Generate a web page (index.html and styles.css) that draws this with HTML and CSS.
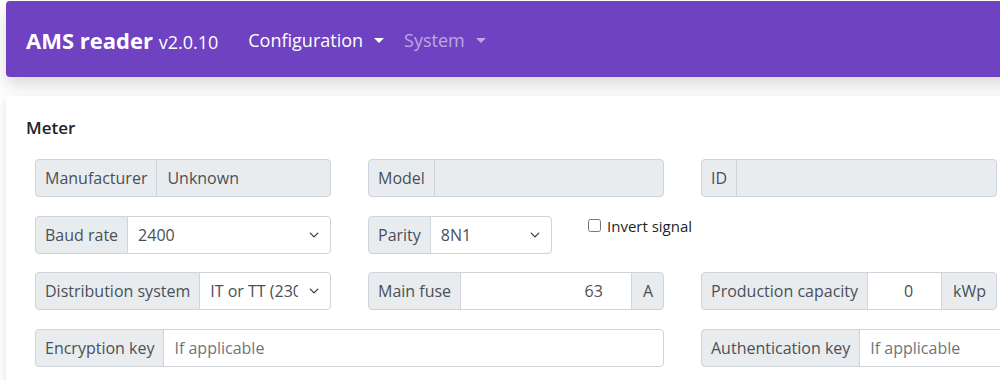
FILE: index.html
```html
<!DOCTYPE html>
<html lang="en">
<head>
    <meta charset="UTF-8">
    <meta name="viewport" content="width=device-width, initial-scale=1.0">
    <title>AMS reader</title>
    <link rel="stylesheet" href="styles.css">
</head>
<body>
   <div class="wrapper">
       <nav class="navbar">
           <a href="#" class="navbar-brand">AMS reader <small>v2.0.10</small></a>
           <ul class="nav">
               <li class="nav-item"><a href="#" class="nav-link dropdown">Configuration</a></li>
               <li class="nav-item"><a href="#" class="nav-link dropdown muted">System</a></li>
           </ul>
       </nav>

       <div class="card">
           <h5 class="card-title">Meter</h5>
           <div class="form-grid">
               <div class="input-group">
                   <span class="input-group-text">Manufacturer</span>
                   <input type="text" class="form-control" value="Unknown" disabled>
               </div>
               <div class="input-group">
                   <span class="input-group-text">Model</span>
                   <input type="text" class="form-control" disabled>
               </div>
               <div class="input-group">
                   <span class="input-group-text">ID</span>
                   <input type="text" class="form-control" disabled>
               </div>

               <div class="input-group">
                   <span class="input-group-text">Baud rate</span>
                   <select class="form-select">
                       <option>2400</option>
                       <option>9600</option>
                   </select>
               </div>
               <div class="cell-flex">
                   <div class="input-group parity">
                       <span class="input-group-text">Parity</span>
                       <select class="form-select">
                           <option>8N1</option>
                           <option>8E1</option>
                       </select>
                   </div>
                   <div class="form-check">
                       <input type="checkbox" id="invert" class="form-check-input">
                       <label for="invert" class="form-check-label">Invert signal</label>
                   </div>
               </div>
               <div></div>

               <div class="input-group">
                   <span class="input-group-text">Distribution system</span>
                   <select class="form-select">
                       <option>IT or TT (230V)</option>
                       <option>TN (400V)</option>
                   </select>
               </div>
               <div class="input-group">
                   <span class="input-group-text">Main fuse</span>
                   <input type="number" class="form-control number" value="63">
                   <span class="input-group-text unit">A</span>
               </div>
               <div class="input-group">
                   <span class="input-group-text">Production capacity</span>
                   <input type="number" class="form-control number" value="0">
                   <span class="input-group-text unit">kWp</span>
               </div>

               <div class="input-group span-2">
                   <span class="input-group-text">Encryption key</span>
                   <input type="text" class="form-control" placeholder="If applicable">
               </div>
               <div class="input-group wide">
                   <span class="input-group-text">Authentication key</span>
                   <input type="text" class="form-control" placeholder="If applicable">
               </div>
           </div>
       </div>
   </div>
</body>
</html>
```

FILE: styles.css
```css
html, body {
    margin: 0;
    overflow: hidden;
    background: #fff;
}
body {
    font-family: "Open Sans", "Noto Sans", sans-serif;
    font-size: 16px;
    color: #212529;
}
.wrapper {
    width: 1400px;
    padding: 1px 0 0 6px;
}
.navbar {
    display: flex;
    align-items: center;
    height: 76px;
    padding: 0 20px;
    background: #6f42c1;
    border-radius: 4px;
    box-shadow: 0 8px 16px rgba(0, 0, 0, 0.15);
}
.navbar-brand {
    color: #fff;
    font-size: 22px;
    font-weight: 700;
    text-decoration: none;
    margin-right: 30px;
    padding-top: 2px;
}
.navbar-brand small {
    font-size: 18px;
    font-weight: 400;
}
.nav {
    display: flex;
    gap: 20px;
    list-style: none;
    margin: 0;
    padding: 2px 0 0 0;
}
.nav-link {
    color: #fff;
    font-size: 18px;
    text-decoration: none;
}
.nav-link.muted {
    color: rgba(255, 255, 255, 0.55);
}
.dropdown::after {
    content: '';
    display: inline-block;
    margin-left: 11px;
    vertical-align: 4px;
    border-top: 5px solid;
    border-left: 5px solid transparent;
    border-right: 5px solid transparent;
}
.card {
    margin-top: 19px;
    padding: 20px 20px 30px 20px;
    background: #fff;
    border-radius: 4px;
    box-shadow: 0 4px 12px rgba(0, 0, 0, 0.12);
}
.card-title {
    margin: 0 0 20px 0;
    font-size: 17px;
    font-weight: 600;
}
.form-grid {
    display: grid;
    grid-template-columns: repeat(3, 296px);
    column-gap: 37px;
    row-gap: 18.5px;
    margin-left: 9px;
}
.span-2 {
    grid-column: span 2;
}
.wide {
    width: 640px;
}
.input-group {
    display: flex;
    height: 38px;
}
.input-group > * {
    box-sizing: border-box;
    height: 38px;
    border: 1px solid #ced4da;
    font: inherit;
    color: #495057;
}
.input-group > * + * {
    margin-left: -1px;
}
.input-group > :first-child {
    border-radius: 4px 0 0 4px;
}
.input-group > :last-child {
    border-radius: 0 4px 4px 0;
}
.input-group-text {
    display: flex;
    align-items: center;
    padding: 0 9px;
    background: #e9ecef;
    white-space: nowrap;
}
.input-group-text.unit {
    padding: 0 10px 0 11px;
}
.form-control, .form-select {
    flex: 1;
    min-width: 0;
    padding: 0 10px;
    background-color: #fff;
    outline: none;
}
.form-control:disabled {
    background: #e9ecef;
}
.form-control::placeholder {
    color: #6c757d;
}
.number {
    text-align: right;
    padding-right: 28px;
    -moz-appearance: textfield;
}
.number::-webkit-inner-spin-button,
.number::-webkit-outer-spin-button {
    -webkit-appearance: none;
    margin: 0;
}
.form-select {
    appearance: none;
    padding-right: 32px;
    background-image: url("data:image/svg+xml,%3csvg xmlns='http://www.w3.org/2000/svg' viewBox='0 0 16 16'%3e%3cpath fill='none' stroke='%23343a40' stroke-linecap='round' stroke-linejoin='round' stroke-width='2' d='M2 5l6 6 6-6'/%3e%3c/svg%3e");
    background-repeat: no-repeat;
    background-position: right 10px center;
    background-size: 12px 10px;
}
.cell-flex {
    display: flex;
    gap: 36px;
    align-items: flex-start;
}
.parity {
    width: 184px;
    flex: none;
}
.form-check {
    display: flex;
    align-items: center;
    gap: 6px;
    margin-top: 0;
    font-size: 15px;
    white-space: nowrap;
}
.form-check-input {
    width: 13px;
    height: 13px;
    margin: 0;
}
```
